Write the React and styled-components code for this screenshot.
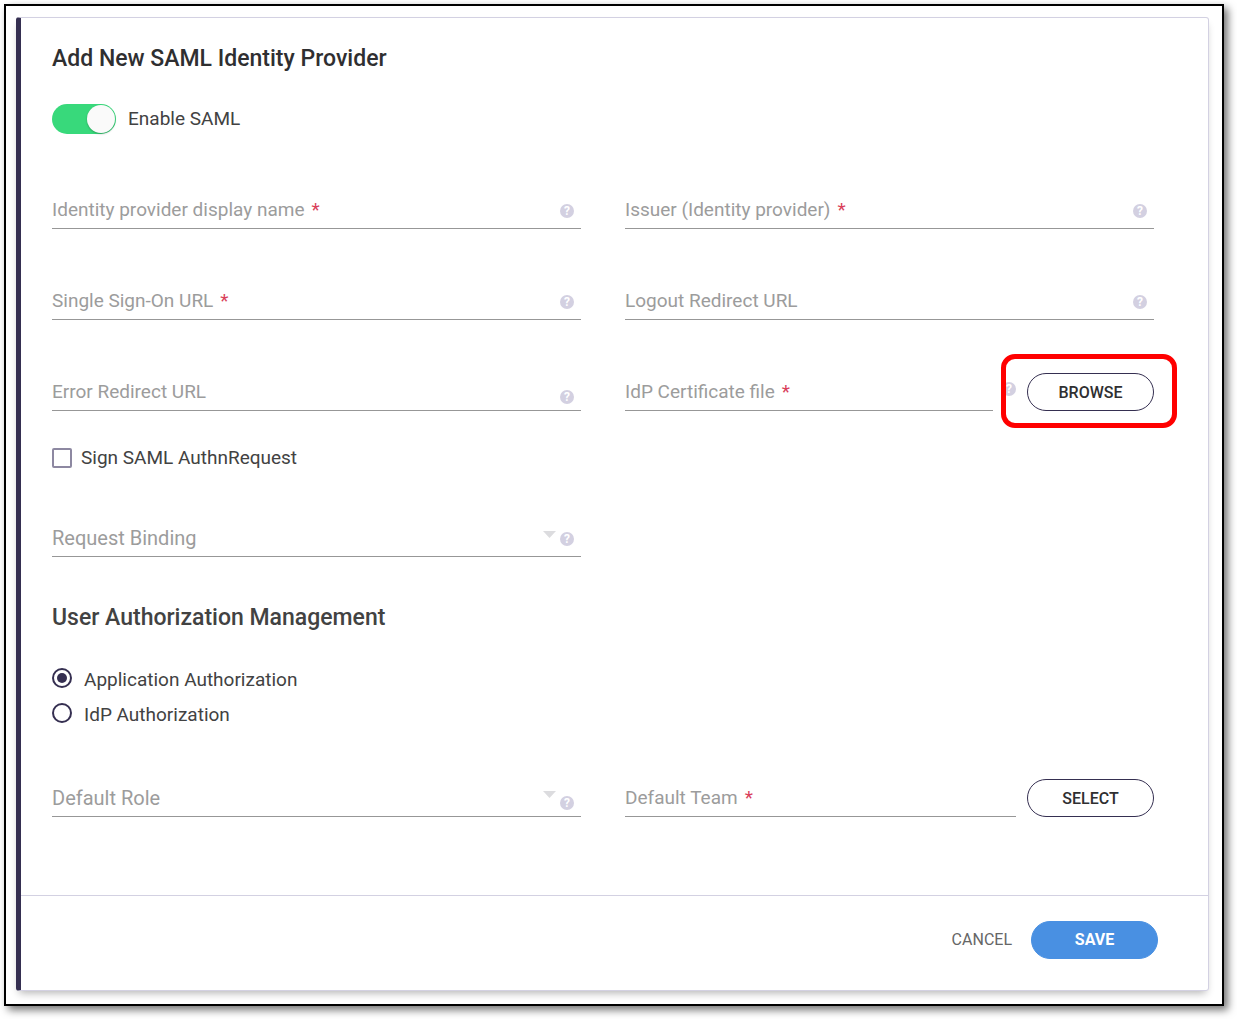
import React, { useState } from 'react'
import styled, { createGlobalStyle, css } from 'styled-components'

const GlobalStyle = createGlobalStyle`
  :root {
    --navy: #352f51;
    --text: #424242;
    --label: #9c9c9c;
    --line: #979797;
    --border: #d3d1e2;
    --help: #d3d0e1;
    --green: #38d97b;
    --blue: #4990e2;
    --required: #d9405a;
    --fs-sm: 16px;
    --fs-md: 19px;
    --fs-select: 20px;
    --fs-lg: 23px;
  }

  * {
    box-sizing: border-box;
  }

  body {
    margin: 0;
    background: #fff;
    color: var(--text);
    font-family: Roboto, 'Liberation Sans', sans-serif;
    font-size: var(--fs-md);
    line-height: 24px;
  }

  button, input, select {
    font: inherit;
    color: inherit;
  }
`

const Frame = styled.main`
  margin: 4px 13px 13px 4px;
  padding: 11px 13px 13px 10px;
  border: 2px solid #000;
  box-shadow: 4px 4px 8px rgba(0, 0, 0, 0.55);
`

const Card = styled.form`
  border: 1px solid var(--border);
  border-left: 5px solid var(--navy);
  border-radius: 3px;
  box-shadow: 0 5px 8px -3px rgba(0, 0, 0, 0.3);
`

const CardBody = styled.div`
  padding: 27px 54px 78px 31px;
`

const Title = styled.h1`
  margin: 0 0 31px;
  color: #2f2f31;
  font-size: var(--fs-lg);
  font-weight: 500;
  line-height: 28px;
`

const Subtitle = styled(Title).attrs({ as: 'h2' })`
  margin: 47px 0 36px;
  color: var(--text);
`

const FieldGrid = styled.div`
  display: grid;
  grid-template-columns: 1fr 1fr;
  gap: 53px 44px;
  margin-top: ${({ $top }) => $top}px;
`

const Toggle = styled.label`
  display: flex;
  align-items: center;
  gap: 12px;

  input {
    appearance: none;
    display: flex;
    justify-content: flex-start;
    width: 64px;
    height: 30px;
    margin: 0;
    padding: 1px;
    border-radius: 15px;
    background: #c4c4c4;
  }

  input::before {
    content: '';
    width: 28px;
    height: 28px;
    border-radius: 50%;
    background: #fafafa;
    box-shadow: 0 1px 2px rgba(0, 0, 0, 0.25);
  }

  input:checked {
    justify-content: flex-end;
    background: var(--green);
  }
`

const controlStyles = css`
  appearance: none;
  grid-area: 1 / 1;
  width: 100%;
  min-width: 0;
  height: 38px;
  margin: 0;
  padding: 6px 40px 6px 0;
  border: 0;
  border-bottom: 1px solid var(--line);
  border-radius: 0;
  background: transparent;
  outline: none;
`

const StyledField = styled.div`
  display: grid;
  flex: 1;

  label {
    grid-area: 1 / 1;
    padding-top: 7px;
    color: var(--label);
    font-size: ${({ $select }) => ($select ? 'var(--fs-select)' : 'var(--fs-md)')};
    pointer-events: none;
  }

  input {
    ${controlStyles};
  }

  select {
    ${controlStyles};
  }
`

const Required = styled.span`
  margin-left: 7px;
  color: var(--required);
`

const Adornments = styled.div`
  grid-area: 1 / 1;
  justify-self: end;
  align-self: end;
  display: flex;
  align-items: flex-end;
  gap: 4px;
  padding: 0 7px ${({ $low }) => ($low ? 7 : 11)}px 0;
  pointer-events: none;
`

const Arrow = styled.svg`
  width: 13px;
  height: 7px;
  margin-bottom: ${({ $low }) => ($low ? 12 : 8)}px;
  fill: #dcdcdf;
`

const HelpButton = styled.button`
  width: 14px;
  height: 14px;
  padding: 0;
  border: 0;
  border-radius: 50%;
  background: var(--help);
  color: #fff;
  font-size: 12px;
  font-weight: 700;
  line-height: 14px;
  text-align: center;
  pointer-events: auto;
`

const InlineRow = styled.div`
  display: flex;
  align-items: flex-end;
  gap: 11px;
`

const FieldWithHelp = styled.div`
  display: flex;
  flex: 1;
  align-items: center;
  gap: 9px;

  ${HelpButton} {
    margin-bottom: 6px;
  }
`

const Button = styled.button`
  width: 127px;
  height: 38px;
  padding: 2px 0 0;
  border: 1px solid var(--navy);
  border-radius: 19px;
  background: #fff;
  color: #2f2f31;
  font-size: var(--fs-sm);
  font-weight: 500;
`

const SaveButton = styled(Button)`
  padding: 0;
  border-color: var(--blue);
  background: var(--blue);
  color: #fff;
  font-weight: 700;
`

const CancelButton = styled.button`
  padding: 0;
  border: 0;
  background: none;
  color: #666;
  font-size: var(--fs-sm);
`

const Highlight = styled.div`
  position: relative;

  &::after {
    content: '';
    position: absolute;
    inset: -19px -23px -17px -26px;
    border: 5px solid #f00;
    border-radius: 14px;
    pointer-events: none;
  }
`

const Checkbox = styled.label`
  display: flex;
  align-items: center;
  gap: 9px;
  margin: 35px 0 0;

  input {
    appearance: none;
    width: 20px;
    height: 20px;
    margin: 0;
    border: 2px solid #8d88a1;
    border-radius: 2px;
  }

  input:checked {
    background: var(--navy);
  }
`

const RadioGroup = styled.div`
  display: grid;
  gap: 11px;
`

const Radio = styled.label`
  display: flex;
  align-items: flex-start;
  gap: 12px;

  input {
    appearance: none;
    width: 20px;
    height: 20px;
    margin: 0;
    padding: 3px;
    border: 2px solid var(--navy);
    border-radius: 50%;
    background-clip: content-box;
  }

  input:checked {
    background-color: var(--navy);
  }
`

const Footer = styled.footer`
  display: flex;
  justify-content: flex-end;
  align-items: center;
  gap: 19px;
  padding: 25px 50px 31px;
  border-top: 1px solid var(--border);
`

const Help = () => <HelpButton type="button">?</HelpButton>

const Field = ({ id, label, required, select, help, low }) => (
  <StyledField $select={select}>
    {select ? (
      <select id={id} defaultValue="">
        <option value="" />
      </select>
    ) : (
      <input id={id} type="text" />
    )}
    <label htmlFor={id}>
      {label}
      {required && <Required>*</Required>}
    </label>
    {help && (
      <Adornments $low={low}>
        {select && (
          <Arrow $low={low} viewBox="0 0 13 7">
            <path d="M0 0h13L6.500 7z" />
          </Arrow>
        )}
        <Help />
      </Adornments>
    )}
  </StyledField>
)

const App = () => {
  const [enabled, setEnabled] = useState(true)
  const [signed, setSigned] = useState(false)
  const [authorization, setAuthorization] = useState('application')

  const authorizations = [
    { value: 'application', label: 'Application Authorization' },
    { value: 'idp', label: 'IdP Authorization' },
  ]

  return (
    <>
      <GlobalStyle />
      <Frame>
        <Card onSubmit={e => e.preventDefault()}>
          <CardBody>
            <Title>Add New SAML Identity Provider</Title>
            <Toggle>
              <input type="checkbox" role="switch" checked={enabled} onChange={e => setEnabled(e.target.checked)} />
              Enable SAML
            </Toggle>

            <FieldGrid $top={57}>
              <Field id="displayName" label="Identity provider display name" required help />
              <Field id="issuer" label="Issuer (Identity provider)" required help />
              <Field id="signOnUrl" label="Single Sign-On URL" required help />
              <Field id="logoutUrl" label="Logout Redirect URL" help />
              <Field id="errorUrl" label="Error Redirect URL" help low />
              <InlineRow>
                <FieldWithHelp>
                  <Field id="certificate" label="IdP Certificate file" required />
                  <Help />
                </FieldWithHelp>
                <Highlight>
                  <Button type="button">BROWSE</Button>
                </Highlight>
              </InlineRow>
            </FieldGrid>

            <Checkbox>
              <input type="checkbox" checked={signed} onChange={e => setSigned(e.target.checked)} />
              Sign SAML AuthnRequest
            </Checkbox>

            <FieldGrid $top={49}>
              <Field id="binding" label="Request Binding" select help />
            </FieldGrid>

            <Subtitle>User Authorization Management</Subtitle>
            <RadioGroup role="radiogroup">
              {authorizations.map(({ value, label }) => (
                <Radio key={value}>
                  <input
                    type="radio"
                    name="authorization"
                    value={value}
                    checked={authorization === value}
                    onChange={() => setAuthorization(value)}
                  />
                  {label}
                </Radio>
              ))}
            </RadioGroup>

            <FieldGrid $top={52}>
              <Field id="role" label="Default Role" select help low />
              <InlineRow>
                <Field id="team" label="Default Team" required />
                <Button type="button">SELECT</Button>
              </InlineRow>
            </FieldGrid>
          </CardBody>

          <Footer>
            <CancelButton type="button">CANCEL</CancelButton>
            <SaveButton type="submit">SAVE</SaveButton>
          </Footer>
        </Card>
      </Frame>
    </>
  )
}

export default App
